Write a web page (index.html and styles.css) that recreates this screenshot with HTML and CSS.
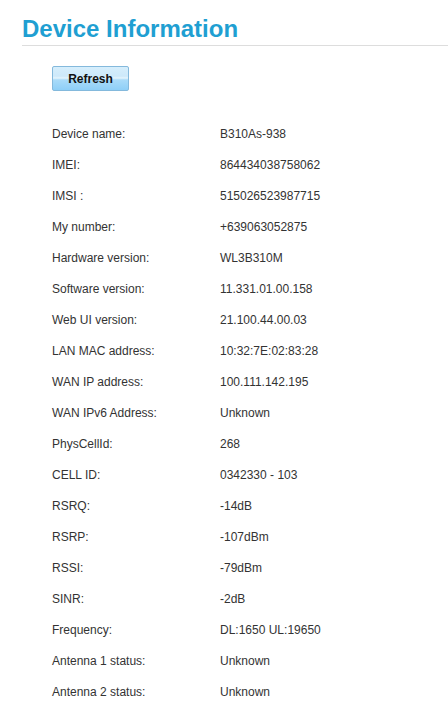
FILE: index.html
```html
<!DOCTYPE html>
<html lang="en">
<head>
    <meta charset="UTF-8">
    <meta name="viewport" content="width=device-width, initial-scale=1.0">
    <title>Device Information</title>
    <link rel="stylesheet" href="styles.css">
</head>
<body>
    <h1 class="page-title">Device Information</h1>
    <div class="content">
        <button type="button" class="btn-refresh">Refresh</button>

        <table class="info-table">
            <tr><td class="label">Device name:</td><td>B310As-938</td></tr>
            <tr><td class="label">IMEI:</td><td>864434038758062</td></tr>
            <tr><td class="label">IMSI :</td><td>515026523987715</td></tr>
            <tr><td class="label">My number:</td><td>+639063052875</td></tr>
            <tr><td class="label">Hardware version:</td><td>WL3B310M</td></tr>
            <tr><td class="label">Software version:</td><td>11.331.01.00.158</td></tr>
            <tr><td class="label">Web UI version:</td><td>21.100.44.00.03</td></tr>
            <tr><td class="label">LAN MAC address:</td><td>10:32:7E:02:83:28</td></tr>
            <tr><td class="label">WAN IP address:</td><td>100.111.142.195</td></tr>
            <tr><td class="label">WAN IPv6 Address:</td><td>Unknown</td></tr>
            <tr><td class="label">PhysCellId:</td><td>268</td></tr>
            <tr><td class="label">CELL ID:</td><td>0342330 - 103</td></tr>
            <tr><td class="label">RSRQ:</td><td>-14dB</td></tr>
            <tr><td class="label">RSRP:</td><td>-107dBm</td></tr>
            <tr><td class="label">RSSI:</td><td>-79dBm</td></tr>
            <tr><td class="label">SINR:</td><td>-2dB</td></tr>
            <tr><td class="label">Frequency:</td><td>DL:1650 UL:19650</td></tr>
            <tr><td class="label">Antenna 1 status:</td><td>Unknown</td></tr>
            <tr><td class="label">Antenna 2 status:</td><td>Unknown</td></tr>
        </table>
    </div>
</body>
</html>
```

FILE: styles.css
```css
/* General Styles */
body {
    margin: 0;
    padding: 0;
    background: #ffffff;
    font-family: "Liberation Sans", Arial, sans-serif;
    font-size: 12px;
    color: #333333;
}

.page-title {
    margin: 15px 0 0 22px;
    padding-bottom: 2px;
    font-size: 24px;
    line-height: 28px;
    font-weight: bold;
    color: #1f9fd2;
    border-bottom: 1px solid #dddddd;
}

.content {
    padding: 20px 0 0 52px;
}

/* Refresh button */
.btn-refresh {
    display: block;
    width: 77px;
    height: 25px;
    padding: 0;
    border: 1px solid #84b9dc;
    border-radius: 2px;
    background: linear-gradient(#d6eefc 0%, #cde9fa 40%, #e6f5fd 48%, #a9dbf9 56%, #8ecff7 100%);
    font-family: "Liberation Sans", Arial, sans-serif;
    font-size: 12px;
    font-weight: bold;
    color: #111111;
    cursor: pointer;
}

/* Info table */
.info-table {
    margin-top: 28px;
    border-collapse: collapse;
}

.info-table td {
    height: 31px;
    padding: 0;
    line-height: 31px;
    white-space: nowrap;
    vertical-align: middle;
}

.info-table .label {
    width: 168px;
}
```
